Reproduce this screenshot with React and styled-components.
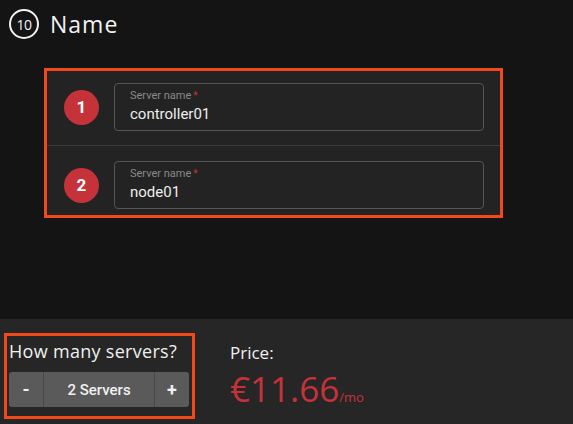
import styled, { createGlobalStyle } from "styled-components";

const Global = createGlobalStyle`
  html, body { margin: 0; padding: 0; background: #141414; }
  body { font-family: "Open Sans", "Liberation Sans", sans-serif; color: #eee; }
`;

const Page = styled.div`
  height: 424px;
  display: flex;
  flex-direction: column;
  overflow: hidden;
`;

const Main = styled.main`
  flex: 1;
  background: #141414;
`;

const Header = styled.div`
  display: flex;
  align-items: center;
  gap: 11px;
  padding: 8px 0 0 9px;
`;

const StepBadge = styled.div`
  width: 26px;
  height: 26px;
  border: 2px solid #f2f2f2;
  border-radius: 50%;
  display: flex;
  align-items: center;
  justify-content: center;
  font-size: 14px;
  color: #f2f2f2;
  letter-spacing: -0.5px;
`;

const Title = styled.h2`
  margin: 0;
  font-size: 23px;
  font-weight: 400;
  color: #f2f2f2;
  letter-spacing: 1px;
`;

const Highlight = styled.div`
  margin: 28px 0 0 44px;
  width: 453px;
  border: 3px solid #f2481b;
  background: #232323;
`;

const Row = styled.div`
  display: flex;
  align-items: center;
  gap: 15px;
  padding: ${(p) => (p.$first ? "12px 16px 14px 17px" : "15px 16px 6px 17px")};
  border-top: ${(p) => (p.$first ? "none" : "1px solid #3c3c3c")};
`;

const Num = styled.div`
  width: 35px;
  height: 35px;
  flex: none;
  border-radius: 50%;
  background: #c6323a;
  color: #fff;
  display: flex;
  align-items: center;
  justify-content: center;
  font-family: Roboto, "Liberation Sans", sans-serif;
  font-weight: 700;
  font-size: 17px;
`;

const Field = styled.div`
  flex: 1;
  height: 48px;
  border: 1px solid #555;
  border-radius: 4px;
  padding: 5px 15px 0;
  box-sizing: border-box;
  font-family: Roboto, "Liberation Sans", sans-serif;
`;

const Label = styled.div`
  font-size: 11px;
  color: #8a8a8a;
  line-height: 13px;
  span { color: #c6323a; margin-left: 2px; font-size: 10px; vertical-align: top; }
`;

const Value = styled.div`
  margin-top: 1px;
  font-size: 15px;
  color: #eee;
  line-height: 22px;
`;

const Footer = styled.footer`
  height: 105px;
  background: #262626;
  display: flex;
  align-items: flex-start;
  padding: 14px 0 0 4px;
  box-sizing: border-box;
  gap: 35px;
`;

const Counter = styled.div`
  box-sizing: border-box;
  width: 191px;
  height: 86px;
  border: 3px solid #f2481b;
  padding: 5px 0 0 2px;
`;

const Question = styled.div`
  font-size: 18px;
  color: #f0f0f0;
  line-height: 20px;
  letter-spacing: 0.3px;
  white-space: nowrap;
`;

const Stepper = styled.div`
  margin-top: 11px;
  width: 180px;
  height: 35px;
  background: #5a5a5a;
  border-radius: 3px;
  display: flex;
  font-family: Roboto, "Liberation Sans", sans-serif;
  color: #f0f0f0;
`;

const StepBtn = styled.div`
  width: ${(p) => (p.$wide ? "112px" : "34px")};
  flex: none;
  box-sizing: border-box;
  display: flex;
  align-items: center;
  justify-content: center;
  font-size: ${(p) => (p.$wide ? "15px" : "18px")};
  font-weight: ${(p) => (p.$wide ? 500 : 700)};
  border-left: ${(p) => (p.$wide ? "1px solid #474747" : "none")};
  border-right: ${(p) => (p.$wide ? "1px solid #474747" : "none")};
`;

const PriceBox = styled.div`
  padding-top: 10px;
`;

const PriceLabel = styled.div`
  font-size: 17px;
  color: #f0f0f0;
  line-height: 20px;
`;

const Amount = styled.div`
  margin-top: 6px;
  color: #c6323a;
  font-size: 35px;
  line-height: 40px;
  white-space: nowrap;
  small { font-size: 13px; }
`;

const servers = ["controller01", "node01"];

export default function App() {
  return (
    <>
      <Global />
      <Page>
        <Main>
          <Header>
            <StepBadge>10</StepBadge>
            <Title>Name</Title>
          </Header>
          <Highlight>
            {servers.map((name, i) => (
              <Row key={name} $first={i === 0}>
                <Num>{i + 1}</Num>
                <Field>
                  <Label>
                    Server name<span>*</span>
                  </Label>
                  <Value>{name}</Value>
                </Field>
              </Row>
            ))}
          </Highlight>
        </Main>
        <Footer>
          <Counter>
            <Question>How many servers?</Question>
            <Stepper>
              <StepBtn>-</StepBtn>
              <StepBtn $wide>2 Servers</StepBtn>
              <StepBtn>+</StepBtn>
            </Stepper>
          </Counter>
          <PriceBox>
            <PriceLabel>Price:</PriceLabel>
            <Amount>
              €11.66<small>/mo</small>
            </Amount>
          </PriceBox>
        </Footer>
      </Page>
    </>
  );
}
